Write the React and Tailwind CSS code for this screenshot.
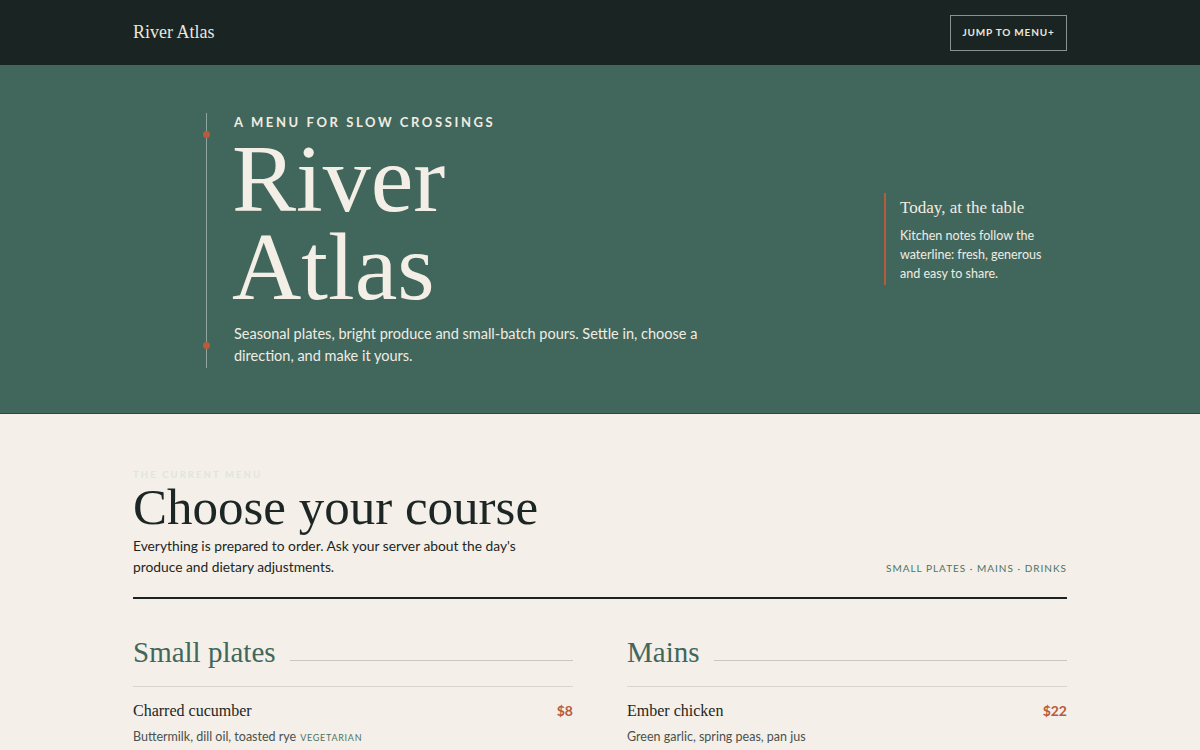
const serif = "font-['Liberation_Serif',Georgia,serif]";
const sans = "font-['Lato','Noto_Sans',sans-serif]";

function Header() {
  return (
    <header className="bg-[#1a2423] h-[65px]">
      <div className="w-[934px] mx-auto h-full flex items-center justify-between">
        <span className={`${serif} text-[18px] text-[#ece6da]`}>River Atlas</span>
        <button className={`${sans} h-9 w-[117px] border border-[#8b918e] text-[10px] font-bold tracking-[0.08em] text-[#ece6da]`}>
          JUMP TO MENU+
        </button>
      </div>
    </header>
  );
}

function Hero() {
  return (
    <section className="bg-[#41675d] h-[349px] border-b border-[#2c4640]">
      <div className="w-[934px] mx-auto h-full flex items-center justify-between">
        <div className="relative ml-[73px] mt-[2px] border-l border-[#8ea69e] pl-[27px] h-[255px]">
          <span className="absolute -left-[4px] top-[18px] w-[7px] h-[7px] rounded-full bg-[#b85b3b]" />
          <span className="absolute -left-[4px] top-[229px] w-[7px] h-[7px] rounded-full bg-[#b85b3b]" />
          <p className={`${sans} text-[13px] leading-[18px] font-bold tracking-[0.2em] text-[#f1ece2]`}>A MENU FOR SLOW CROSSINGS</p>
          <h1 className={`${serif} text-[96px] leading-[88px] text-[#f4efe6] -ml-[2px] mt-[4px]`}>
            River
            <br />
            Atlas
          </h1>
          <p className={`${sans} mt-[12px] w-[480px] text-[14.5px] leading-[22px] text-[#f1ece2]`}>
            Seasonal plates, bright produce and small-batch pours. Settle in, choose a direction, and make it yours.
          </p>
        </div>
        <aside className="w-[183px] border-l-2 border-[#b85b3b] pl-[14px] pr-[14px] py-[2px]">
          <h2 className={`${serif} text-[17px] text-[#f1ece2]`}>Today, at the table</h2>
          <p className={`${sans} mt-[6px] text-[12.5px] leading-[19px] text-[#f1ece2]`}>
            Kitchen notes follow the waterline: fresh, generous and easy to share.
          </p>
        </aside>
      </div>
    </section>
  );
}

function Item({ name, price, desc, tag }) {
  return (
    <div className="pt-[12px]">
      <div className="flex justify-between items-baseline">
        <span className={`${serif} text-[16px] text-[#1c2624]`}>{name}</span>
        <span className={`${sans} text-[14px] font-bold text-[#b85b3b]`}>{price}</span>
      </div>
      <p className={`${sans} mt-[5px] text-[12.5px] text-[#4a514e]`}>
        {desc}
        {tag && <span className="ml-1 text-[9px] tracking-[0.08em] text-[#4d7366]">{tag}</span>}
      </p>
    </div>
  );
}

function Column({ title, children }) {
  return (
    <div>
      <div className="flex items-center gap-[14px] pb-[16px] border-b border-[#d9d5cd]">
        <h3 className={`${serif} text-[29px] leading-[36px] text-[#41675d] whitespace-nowrap`}>{title}</h3>
        <div className="flex-1 h-px bg-[#c9c7c0] mt-[17px]" />
      </div>
      {children}
    </div>
  );
}

function Menu() {
  return (
    <section className="bg-[#f4efe8] pt-[54px] pb-10">
      <div className="w-[934px] mx-auto">
        <p className={`${sans} text-[9.5px] font-bold tracking-[0.22em] text-[#dfe6df]`}>THE CURRENT MENU</p>
        <div className="flex justify-between items-end pb-[20px] border-b-2 border-[#1a2423]">
          <div>
            <h2 className={`${serif} text-[51px] leading-[48px] text-[#1c2624] mt-[1px]`}>Choose your course</h2>
            <p className={`${sans} mt-[4px] w-[410px] text-[13.8px] leading-[21px] text-[#1c2624]`}>
              Everything is prepared to order. Ask your server about the day's produce and dietary adjustments.
            </p>
          </div>
          <p className={`${sans} text-[10px] tracking-[0.1em] text-[#4d7366] pb-[1px]`}>SMALL PLATES · MAINS · DRINKS</p>
        </div>
        <div className="grid grid-cols-2 gap-[54px] mt-[35px]">
          <Column title="Small plates">
            <Item name="Charred cucumber" price="$8" desc="Buttermilk, dill oil, toasted rye" tag="VEGETARIAN" />
          </Column>
          <Column title="Mains">
            <Item name="Ember chicken" price="$22" desc="Green garlic, spring peas, pan jus" />
          </Column>
        </div>
      </div>
    </section>
  );
}

export default function App() {
  return (
    <div className="min-h-screen bg-[#f4efe8]">
      <Header />
      <Hero />
      <Menu />
    </div>
  );
}
